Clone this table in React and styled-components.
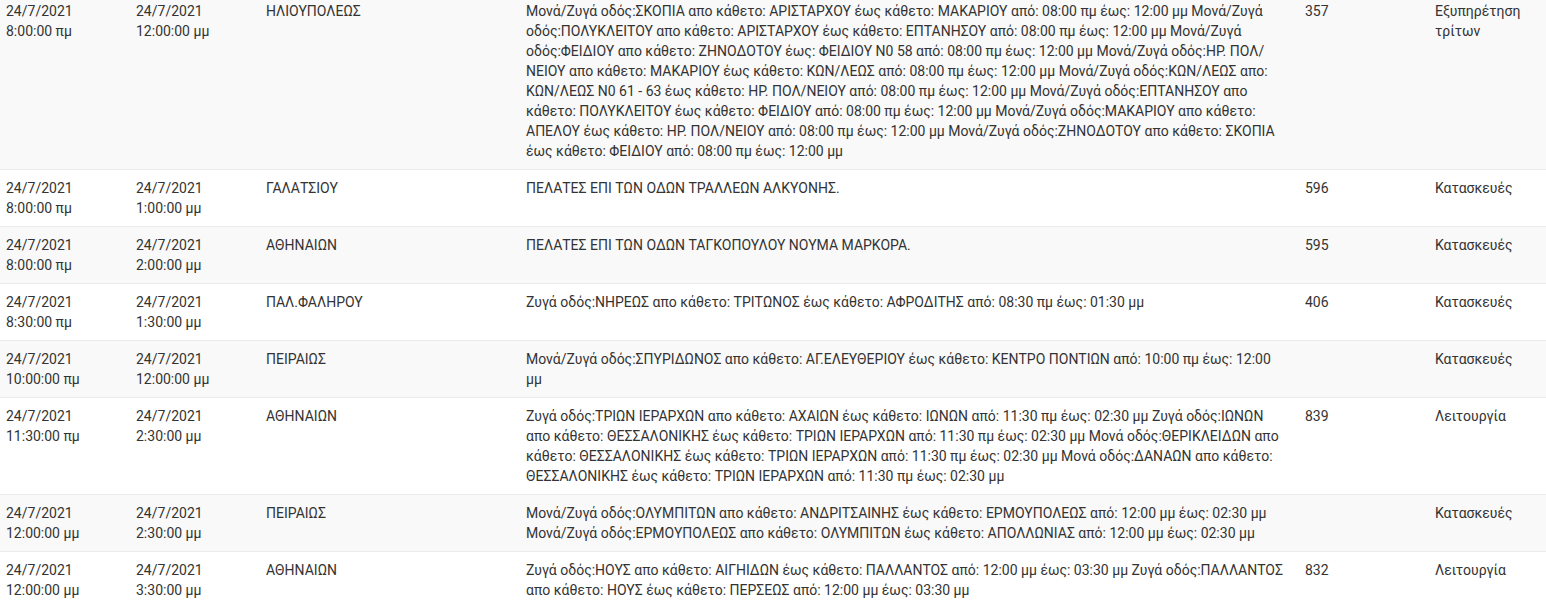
import React from 'react';
import styled, { createGlobalStyle } from 'styled-components';

const GlobalStyle = createGlobalStyle`
  html, body {
    margin: 0;
    padding: 0;
    background: #fff;
    overflow: hidden;
  }
  body {
    font-family: Roboto, "Noto Sans", "Liberation Sans", sans-serif;
    font-size: 14px;
    line-height: 20px;
    color: #333;
  }
`;

const rows = [
  {
    start: ['24/7/2021', '8:00:00 πμ'],
    end: ['24/7/2021', '12:00:00 μμ'],
    area: 'ΗΛΙΟΥΠΟΛΕΩΣ',
    desc: [
      'Μονά/Ζυγά οδός:ΣΚΟΠΙΑ απο κάθετο: ΑΡΙΣΤΑΡΧΟΥ έως κάθετο: ΜΑΚΑΡΙΟΥ από: 08:00 πμ έως: 12:00 μμ Μονά/Ζυγά',
      'οδός:ΠΟΛΥΚΛΕΙΤΟΥ απο κάθετο: ΑΡΙΣΤΑΡΧΟΥ έως κάθετο: ΕΠΤΑΝΗΣΟΥ από: 08:00 πμ έως: 12:00 μμ Μονά/Ζυγά',
      'οδός:ΦΕΙΔΙΟΥ απο κάθετο: ΖΗΝΟΔΟΤΟΥ έως: ΦΕΙΔΙΟΥ Ν0 58 από: 08:00 πμ έως: 12:00 μμ Μονά/Ζυγά οδός:ΗΡ. ΠΟΛ/',
      'ΝΕΙΟΥ απο κάθετο: ΜΑΚΑΡΙΟΥ έως κάθετο: ΚΩΝ/ΛΕΩΣ από: 08:00 πμ έως: 12:00 μμ Μονά/Ζυγά οδός:ΚΩΝ/ΛΕΩΣ απο:',
      'ΚΩΝ/ΛΕΩΣ Ν0 61 - 63 έως κάθετο: ΗΡ. ΠΟΛ/ΝΕΙΟΥ από: 08:00 πμ έως: 12:00 μμ Μονά/Ζυγά οδός:ΕΠΤΑΝΗΣΟΥ απο',
      'κάθετο: ΠΟΛΥΚΛΕΙΤΟΥ έως κάθετο: ΦΕΙΔΙΟΥ από: 08:00 πμ έως: 12:00 μμ Μονά/Ζυγά οδός:ΜΑΚΑΡΙΟΥ απο κάθετο:',
      'ΑΠΕΛΟΥ έως κάθετο: ΗΡ. ΠΟΛ/ΝΕΙΟΥ από: 08:00 πμ έως: 12:00 μμ Μονά/Ζυγά οδός:ΖΗΝΟΔΟΤΟΥ απο κάθετο: ΣΚΟΠΙΑ',
      'έως κάθετο: ΦΕΙΔΙΟΥ από: 08:00 πμ έως: 12:00 μμ',
    ],
    code: '357',
    reason: ['Εξυπηρέτηση', 'τρίτων'],
  },
  {
    start: ['24/7/2021', '8:00:00 πμ'],
    end: ['24/7/2021', '1:00:00 μμ'],
    area: 'ΓΑΛΑΤΣΙΟΥ',
    desc: ['ΠΕΛΑΤΕΣ ΕΠΙ ΤΩΝ ΟΔΩΝ ΤΡΑΛΛΕΩΝ ΑΛΚΥΟΝΗΣ.'],
    code: '596',
    reason: ['Κατασκευές'],
  },
  {
    start: ['24/7/2021', '8:00:00 πμ'],
    end: ['24/7/2021', '2:00:00 μμ'],
    area: 'ΑΘΗΝΑΙΩΝ',
    desc: ['ΠΕΛΑΤΕΣ ΕΠΙ ΤΩΝ ΟΔΩΝ ΤΑΓΚΟΠΟΥΛΟΥ ΝΟΥΜΑ ΜΑΡΚΟΡΑ.'],
    code: '595',
    reason: ['Κατασκευές'],
  },
  {
    start: ['24/7/2021', '8:30:00 πμ'],
    end: ['24/7/2021', '1:30:00 μμ'],
    area: 'ΠΑΛ.ΦΑΛΗΡΟΥ',
    desc: ['Ζυγά οδός:ΝΗΡΕΩΣ απο κάθετο: ΤΡΙΤΩΝΟΣ έως κάθετο: ΑΦΡΟΔΙΤΗΣ από: 08:30 πμ έως: 01:30 μμ'],
    code: '406',
    reason: ['Κατασκευές'],
  },
  {
    start: ['24/7/2021', '10:00:00 πμ'],
    end: ['24/7/2021', '12:00:00 μμ'],
    area: 'ΠΕΙΡΑΙΩΣ',
    desc: [
      'Μονά/Ζυγά οδός:ΣΠΥΡΙΔΩΝΟΣ απο κάθετο: ΑΓ.ΕΛΕΥΘΕΡΙΟΥ έως κάθετο: ΚΕΝΤΡΟ ΠΟΝΤΙΩΝ από: 10:00 πμ έως: 12:00',
      'μμ',
    ],
    code: '',
    reason: ['Κατασκευές'],
  },
  {
    start: ['24/7/2021', '11:30:00 πμ'],
    end: ['24/7/2021', '2:30:00 μμ'],
    area: 'ΑΘΗΝΑΙΩΝ',
    desc: [
      'Ζυγά οδός:ΤΡΙΩΝ ΙΕΡΑΡΧΩΝ απο κάθετο: ΑΧΑΙΩΝ έως κάθετο: ΙΩΝΩΝ από: 11:30 πμ έως: 02:30 μμ Ζυγά οδός:ΙΩΝΩΝ',
      'απο κάθετο: ΘΕΣΣΑΛΟΝΙΚΗΣ έως κάθετο: ΤΡΙΩΝ ΙΕΡΑΡΧΩΝ από: 11:30 πμ έως: 02:30 μμ Μονά οδός:ΘΕΡΙΚΛΕΙΔΩΝ απο',
      'κάθετο: ΘΕΣΣΑΛΟΝΙΚΗΣ έως κάθετο: ΤΡΙΩΝ ΙΕΡΑΡΧΩΝ από: 11:30 πμ έως: 02:30 μμ Μονά οδός:ΔΑΝΑΩΝ απο κάθετο:',
      'ΘΕΣΣΑΛΟΝΙΚΗΣ έως κάθετο: ΤΡΙΩΝ ΙΕΡΑΡΧΩΝ από: 11:30 πμ έως: 02:30 μμ',
    ],
    code: '839',
    reason: ['Λειτουργία'],
  },
  {
    start: ['24/7/2021', '12:00:00 μμ'],
    end: ['24/7/2021', '2:30:00 μμ'],
    area: 'ΠΕΙΡΑΙΩΣ',
    desc: [
      'Μονά/Ζυγά οδός:ΟΛΥΜΠΙΤΩΝ απο κάθετο: ΑΝΔΡΙΤΣΑΙΝΗΣ έως κάθετο: ΕΡΜΟΥΠΟΛΕΩΣ από: 12:00 μμ έως: 02:30 μμ',
      'Μονά/Ζυγά οδός:ΕΡΜΟΥΠΟΛΕΩΣ απο κάθετο: ΟΛΥΜΠΙΤΩΝ έως κάθετο: ΑΠΟΛΛΩΝΙΑΣ από: 12:00 μμ έως: 02:30 μμ',
    ],
    code: '',
    reason: ['Κατασκευές'],
  },
  {
    start: ['24/7/2021', '12:00:00 μμ'],
    end: ['24/7/2021', '3:30:00 μμ'],
    area: 'ΑΘΗΝΑΙΩΝ',
    desc: [
      'Ζυγά οδός:ΗΟΥΣ απο κάθετο: ΑΙΓΗΙΔΩΝ έως κάθετο: ΠΑΛΛΑΝΤΟΣ από: 12:00 μμ έως: 03:30 μμ Ζυγά οδός:ΠΑΛΛΑΝΤΟΣ',
      'απο κάθετο: ΗΟΥΣ έως κάθετο: ΠΕΡΣΕΩΣ από: 12:00 μμ έως: 03:30 μμ',
    ],
    code: '832',
    reason: ['Λειτουργία'],
  },
];

const Lines = ({ items }) => items.map((line, i) => <Line key={i}>{line}</Line>);

const App = () => {
  return (
    <>
      <GlobalStyle />
      <Scroller>
        <Table>
          <colgroup>
            <col style={{ width: 130 }} />
            <col style={{ width: 130 }} />
            <col style={{ width: 260 }} />
            <col style={{ width: 779 }} />
            <col style={{ width: 130 }} />
            <col />
          </colgroup>
          <tbody>
            {rows.map((row, i) => (
              <Row key={i} $striped={i % 2 === 0}>
                <Cell><Lines items={row.start} /></Cell>
                <Cell><Lines items={row.end} /></Cell>
                <Cell>{row.area}</Cell>
                <Cell><Lines items={row.desc} /></Cell>
                <Cell>{row.code}</Cell>
                <Cell><Lines items={row.reason} /></Cell>
              </Row>
            ))}
          </tbody>
        </Table>
      </Scroller>
    </>
  );
};

const Scroller = styled.div`
  width: 1546px;
  height: 606px;
  overflow: hidden;
`;

// the list is scrolled a little, so the first row's top padding is out of view
const Table = styled.table`
  width: 1546px;
  margin-top: -8px;
  border-collapse: collapse;
  table-layout: fixed;
`;

const Row = styled.tr`
  background: ${(p) => (p.$striped ? '#f9f9f9' : '#fff')};
`;

const Cell = styled.td`
  padding: 8px 6px;
  vertical-align: top;
  text-align: left;
  border-top: 1px solid #ebebeb;
  overflow: hidden;
`;

const Line = styled.span`
  display: block;
  white-space: nowrap;
`;

export default App;
